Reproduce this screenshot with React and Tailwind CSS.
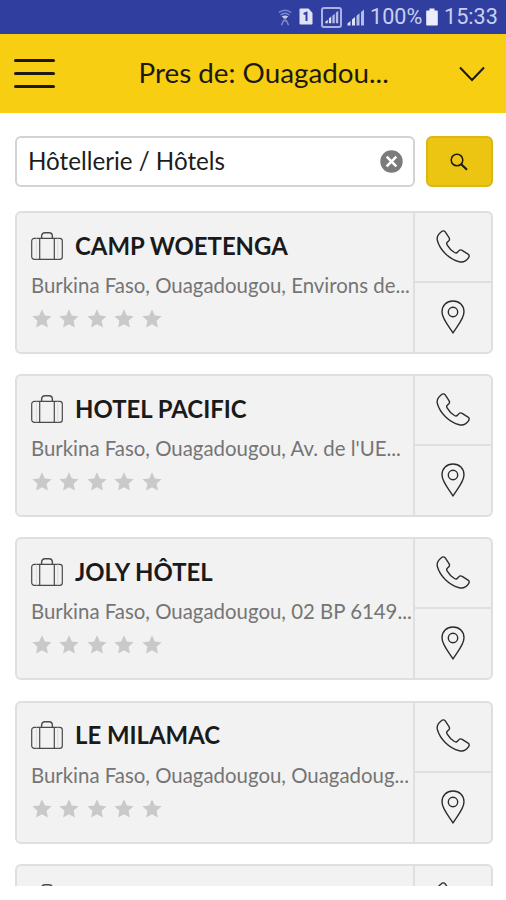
const hotels = [
  { name: 'CAMP WOETENGA', address: 'Burkina Faso, Ouagadougou, Environs de...' },
  { name: 'HOTEL PACIFIC', address: "Burkina Faso, Ouagadougou, Av. de l'UE..." },
  { name: 'JOLY HÔTEL', address: 'Burkina Faso, Ouagadougou, 02 BP 6149...' },
  { name: 'LE MILAMAC', address: 'Burkina Faso, Ouagadougou, Ouagadoug...' },
  { name: '', address: '' },
];

const WifiIcon = () => (
  <svg className="h-[17px] w-[14px]" viewBox="0 0 14 17" fill="none" stroke="#7f8bd0" strokeWidth="1.5">
    <path d="M0.8 3.5Q7-1.2 13.2 3.5M2.6 6Q7 2.5 11.4 6" />
    <path d="M3.8 7.2Q7 5.6 10.2 7.2L7.8 10h-1.6z" fill="#c3c9ee" stroke="none" />
    <path d="M7 9v2.5M3.5 16.2l2-4.4h3l2 4.4" />
  </svg>
);

const SimIcon = () => (
  <svg className="h-[17px] w-[14px]" viewBox="0 0 14 17">
    <path d="M1.5 0.5h8L13.5 5v10.5q0 1-1 1h-11q-1 0-1-1v-14q0-1 1-1z" fill="#dfe3fa" />
    <path d="M4.6 6L7.5 4.8V13" fill="none" stroke="#303f9f" strokeWidth="2" />
  </svg>
);

const SignalIcon = ({ className }) => (
  <svg className={className} viewBox="0 0 18 17" fill="#dfe3fa">
    <path d="M0.5 16.5v-2l3-2.5v4.5zM5 16.5v-6l3-2.5v8.5z" />
    <path d="M9.5 16.5V6.8l3-2.6v12.3zM14 16.5V3l3-2.5v16z" fill="#b4bce8" />
  </svg>
);

const BatteryIcon = () => (
  <svg className="h-[18px] w-[12px]" viewBox="0 0 12 18" fill="#eceefd">
    <path d="M3.5 0.5h5v2h2.5q0.8 0 0.8 0.8v13.4q0 0.8-0.8 0.8H1q-0.8 0-0.8-0.8V3.3q0-0.8 0.8-0.8h2.5z" />
  </svg>
);

const SuitcaseIcon = () => (
  <svg className="h-[28px] w-[32px] shrink-0" viewBox="0 0 32 28" fill="none" stroke="#4a4a4a" strokeWidth="1.2">
    <rect x="0.7" y="6.3" width="30.6" height="21" rx="2.6" />
    <path d="M8.7 6.3v21M23.3 6.3v21" />
    <path d="M10.6 6V4.4Q10.6 0.8 14 0.8h4Q21.4 0.8 21.4 4.4V6" strokeWidth="1.4" />
    <path d="M5.5 6.3v21M26.8 6.3v21" stroke="#d6d6d6" strokeWidth="0.7" />
  </svg>
);

const PhoneIcon = () => (
  <svg className="h-[33px] w-[34px] shrink-0" viewBox="0 0 35 34" fill="none" stroke="#2b2b2b" strokeWidth="1.4" strokeLinejoin="round">
    <path d="M5.2 2C6.9 0.4 8.4 0.5 9.5 2L13.4 7.8C14.3 9.3 14.2 10.2 13 11.3L11.6 12.6C10.7 13.5 10.7 14.2 11.4 15.4C13.2 18.6 15.8 21.2 19 23.2C20.4 24 21.2 24 22.1 23L23.4 21.5C24.4 20.3 25.5 20.2 26.9 21L33 24.8C34.4 25.8 34.5 27 33.6 28.4C31.5 31.6 28 33.6 24 32.7C13.5 30 4 20.5 1.4 10.8C0.4 7 2 4.6 5.2 2Z" />
  </svg>
);

const PinIcon = () => (
  <svg className="h-[34px] w-[24px] shrink-0" viewBox="0 0 24 34" fill="none" stroke="#2b2b2b" strokeWidth="1.4">
    <path d="M12 33C9.5 28 1 19.5 1 11.8C1 5.4 5.6 1 12 1S23 5.4 23 11.8C23 19.5 14.5 28 12 33Z" strokeLinejoin="round" />
    <circle cx="12" cy="12" r="4.7" />
  </svg>
);

const StarIcon = () => (
  <svg className="h-[19px] w-[20px]" viewBox="0 0 20 19" fill="#c9c9c9">
    <path d="M10 0.3L12.8 6.4L19.6 7.2L14.6 11.8L15.9 18.6L10 15.3L4.1 18.6L5.4 11.8L0.4 7.2L7.2 6.4Z" />
  </svg>
);

const StatusBar = () => (
  <div className="flex h-[34px] shrink-0 items-center justify-end bg-[#303f9f] pr-[9px] text-[#c9cff0]">
    <WifiIcon />
    <span className="ml-[7px] flex pb-px"><SimIcon /></span>
    <span className="ml-2 flex h-[21px] w-[21px] items-center justify-center rounded-[3px] border-2 border-[#aab3e2]">
      <SignalIcon className="h-[14px] w-[14px]" />
    </span>
    <SignalIcon className="ml-[5px] h-[17px] w-[18px]" />
    <span className="ml-[5px] w-[53px] font-[Roboto] text-[21.6px] whitespace-nowrap">100%</span>
    <span className="ml-[3px] flex"><BatteryIcon /></span>
    <span className="ml-[6px] w-[53px] font-[Roboto] text-[21.6px] whitespace-nowrap">15:33</span>
  </div>
);

const Header = () => (
  <header className="flex h-[79px] shrink-0 items-center bg-[#f7ce12] pr-[21px] pl-[14px]">
    <button className="flex w-[41px] flex-col gap-[10px]">
      <span className="h-[3px] rounded-xs bg-[#1c1a10]" />
      <span className="h-[3px] rounded-xs bg-[#1c1a10]" />
      <span className="h-[3px] rounded-xs bg-[#1c1a10]" />
    </button>
    <h1 className="flex-1 pb-[2px] pl-[83.5px] text-[27.8px] whitespace-nowrap text-[#1c1a10]">Pres de: Ouagadou...</h1>
    <svg className="h-[16px] w-[26px]" viewBox="0 0 26 16" fill="none" stroke="#1c1a10" strokeWidth="2">
      <path d="M1 1.5L13 14L25 1.5" />
    </svg>
  </header>
);

const SearchBar = () => (
  <div className="flex h-[51px] shrink-0 gap-[11px]">
    <div className="flex w-[400px] items-center justify-between rounded-md border-2 border-[#d3d3d3] bg-white pr-[10px] pl-[11px]">
      <span className="text-[24.2px] whitespace-nowrap text-[#1c1c1c]">Hôtellerie / Hôtels</span>
      <svg className="h-[23px] w-[23px]" viewBox="0 0 23 23">
        <circle cx="11.5" cy="11.5" r="11.2" fill="#7b7b7b" />
        <path d="M6.7 6.7l9.6 9.6M16.3 6.7l-9.6 9.6" stroke="#fff" strokeWidth="2.6" />
      </svg>
    </div>
    <button className="flex flex-1 items-center justify-center rounded-md border-2 border-[#dcb615] bg-[#ecc412] pr-[2px]">
      <svg className="h-[18px] w-[18px]" viewBox="0 0 18 18" fill="none" stroke="#1c1a10">
        <circle cx="7" cy="7" r="5.8" strokeWidth="1.5" />
        <path d="M11.2 11.2L17 16.7" strokeWidth="2.1" />
      </svg>
    </button>
  </div>
);

const HotelCard = ({ name, address }) => (
  <article className="flex h-[143px] shrink-0 rounded-md border-2 border-[#dfdfdf] bg-[#f2f2f2]">
    <div className="w-[396px] shrink-0 pt-4 pl-[14px]">
      <div className="flex h-[33px] items-center gap-[12px]">
        <SuitcaseIcon />
        <h2 className="text-[23.9px] font-bold whitespace-nowrap text-[#1a1a1a]">{name}</h2>
      </div>
      <p className="mt-[7px] h-[32px] text-[20.4px] leading-[32px] whitespace-nowrap text-[#757575]">{address}</p>
      <div className="mt-2 flex gap-[7.4px] pl-px">
        <StarIcon />
        <StarIcon />
        <StarIcon />
        <StarIcon />
        <StarIcon />
      </div>
    </div>
    <div className="flex flex-1 flex-col border-l-2 border-[#dfdfdf]">
      <button className="flex h-[70px] items-center justify-center border-b-2 border-[#dfdfdf] pr-px pb-[2px]">
        <PhoneIcon />
      </button>
      <button className="flex flex-1 items-center justify-center pr-px pb-px">
        <PinIcon />
      </button>
    </div>
  </article>
);

const App = () => {
  return (
    <div className="h-[900px] w-[506px] bg-white font-[Lato,sans-serif]">
      <div className="flex h-[886px] flex-col overflow-hidden">
        <StatusBar />
        <Header />
        <main className="flex min-h-0 flex-1 flex-col overflow-hidden pt-[23px] pr-[13px] pl-[15px]">
          <SearchBar />
          <div className="mt-[24px] flex flex-col gap-[20.2px]">
            {hotels.map((hotel, i) => (
              <HotelCard key={i} name={hotel.name} address={hotel.address} />
            ))}
          </div>
        </main>
      </div>
    </div>
  );
};

export default App;
